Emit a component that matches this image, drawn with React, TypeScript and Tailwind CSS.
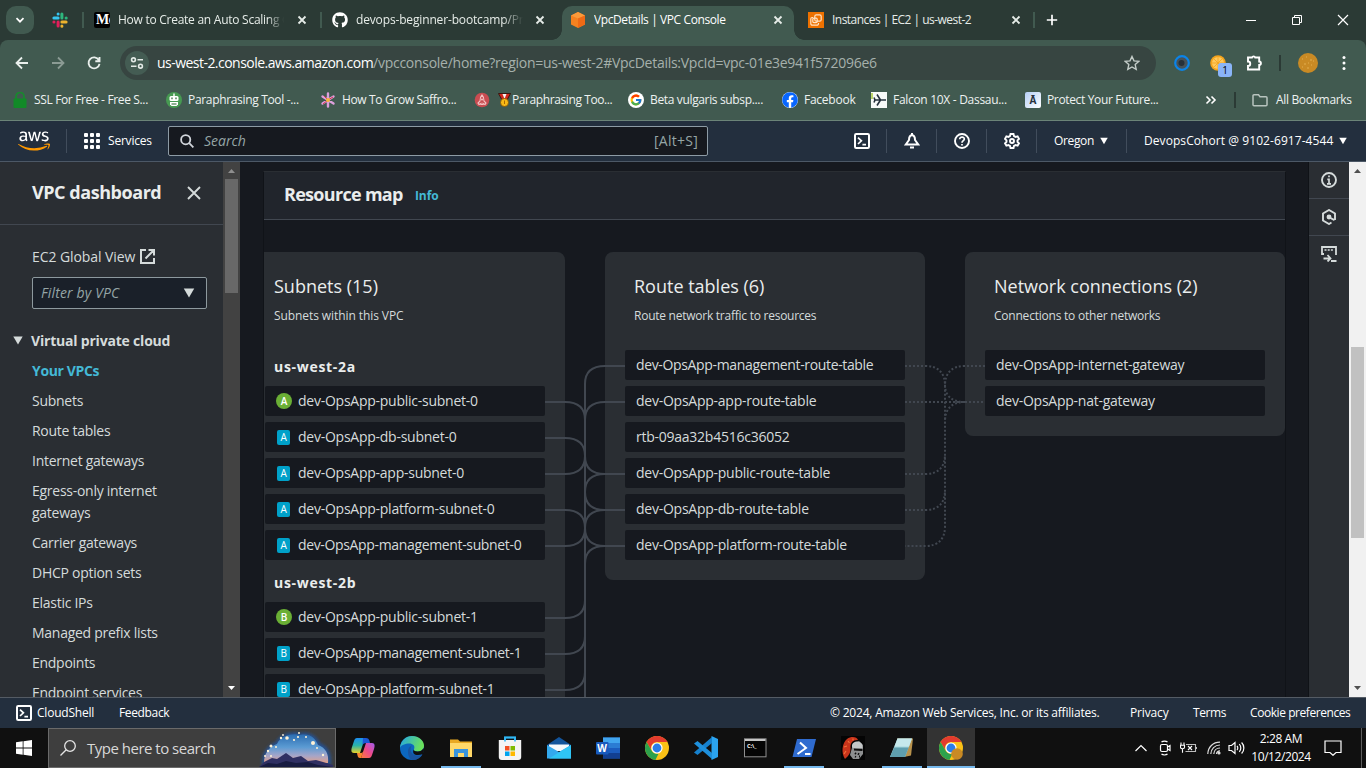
import React from "react";
import { FaAws, FaGithub, FaFacebook } from "react-icons/fa";
import { FcGoogle } from "react-icons/fc";

type Kids = { children?: React.ReactNode; className?: string };

/* ---------- small shared pieces ---------- */

const Cross = ({ className = "size-3" }: { className?: string }) => (
  <svg viewBox="0 0 12 12" className={`${className} shrink-0`} stroke="currentColor" strokeWidth="1.8" fill="none">
    <path d="M2.5 2.5l7 7M9.5 2.5l-7 7" />
  </svg>
);

const Caret = ({ className = "" }: { className?: string }) => (
  <svg viewBox="0 0 10 9" className={`shrink-0 ${className}`} fill="currentColor">
    <path d="M.3.5h9.4L5 8.5z" />
  </svg>
);

const ShellIcon = () => (
  <svg viewBox="0 0 16 16" className="size-4 shrink-0" fill="none" stroke="currentColor" strokeWidth="2">
    <rect x="1" y="1" width="14" height="14" rx="1.2" />
    <path d="M4 4.6l3.4 3.2L4 11M8.4 11.6H12" strokeWidth="1.7" />
  </svg>
);

/* ---------- browser chrome ---------- */

const SlackIcon = () => (
  <svg viewBox="0 0 16 16" className="size-4 shrink-0">
    <g strokeWidth="3" strokeLinecap="round">
      <path d="M6.1 1.9v.1M1.9 6.1h4.200" stroke="#36c5f0" />
      <path d="M9.9 1.9v4.200M14.1 6.1h.1" stroke="#2eb67d" />
      <path d="M9.9 9.9h4.2M9.9 14.1v.1" stroke="#ecb22e" />
      <path d="M6.1 9.9v4.2M1.9 9.9h.1" stroke="#e01e5a" />
    </g>
  </svg>
);

const MediumIcon = () => (
  <div className="flex size-4 shrink-0 items-center overflow-hidden rounded-[2px] bg-black pl-[2px] font-['Liberation_Serif',serif] text-[14px] font-bold leading-none tracking-[-0.5px] text-white">
    Me
  </div>
);

const VpcIcon = () => (
  <svg viewBox="0 0 16 16" className="size-4 shrink-0">
    <path d="M8 0l7 3.4v9L8 16l-7-3.600V3.400z" fill="#f58220" />
    <path d="M8 0l7 3.400-7 3.200-7-3.200z" fill="#fb9a3a" />
    <path d="M15 3.400v9L8 16V6.600z" fill="#ef6a15" />
  </svg>
);

const Ec2Icon = () => (
  <svg viewBox="0 0 16 16" className="size-4 shrink-0">
    <rect width="16" height="16" fill="#ed7100" />
    <g fill="none" stroke="#ffe3c4" strokeWidth="1.200">
      <rect x="6.800" y="2.800" width="6.400" height="6.400" rx="1.500" />
      <path d="M5 5.500h-.800A1.500 1.500 0 0 0 2.800 7v4.700a1.500 1.500 0 0 0 1.500 1.500H9a1.500 1.500 0 0 0 1.500-1.500V11" />
      <rect x="4.800" y="6.200" width="4.400" height="4.400" rx="1" />
    </g>
  </svg>
);

const TabText = ({ children, className = "" }: Kids) => (
  <span className={`ml-2 min-w-0 flex-1 overflow-hidden whitespace-nowrap text-[12px] ${className}`}>{children}</span>
);

const Divider = () => <span className="-ml-px h-4 w-0.5 shrink-0 bg-[#415a50]" />;

const TabStrip = () => (
  <div className="flex h-10 shrink-0 bg-[#2b3a35] text-[#e6ece8]">
    <div className="flex w-[82px] shrink-0 items-center pl-1.5">
      <div className="flex size-7 items-center justify-center rounded-[10px] bg-[#415a50]">
        <svg viewBox="0 0 10 10" className="size-2.5" fill="none" stroke="white" strokeWidth="1.700"><path d="M1.500 3.200L5 6.700l3.500-3.500" /></svg>
      </div>
      <span className="ml-[18px]"><SlackIcon /></span>
    </div>
    <div className="flex w-[238px] shrink-0 items-center pr-3">
      <span className="mr-[10px] h-4 w-0.5 bg-[#415a50]" />
      <MediumIcon />
      <TabText className="mr-3 tracking-[-0.26px] [mask-image:linear-gradient(to_right,black_90%,transparent)]">How to Create an Auto Scaling Group</TabText>
      <Cross />
    </div>
    <div className="flex w-[242px] shrink-0 items-center pr-4">
      <span className="mr-[10px] h-4 w-0.5 bg-[#415a50]" />
      <FaGithub className="size-4 shrink-0 text-white" />
      <TabText className="mr-[11px] tracking-[-0.15px] [mask-image:linear-gradient(to_right,black_88%,transparent)]">devops-beginner-bootcamp/Projects</TabText>
      <Cross />
    </div>
    <div className="relative mt-1.5 flex w-[232px] shrink-0 items-center rounded-t-[10px] bg-[#415a50] pb-1.5 pl-2 pr-[10px]">
      <span className="absolute -left-2.5 bottom-0 size-2.5 bg-[radial-gradient(circle_at_0_0,transparent_9.500px,#415a50_10px)]" />
      <span className="absolute -right-2.5 bottom-0 size-2.5 bg-[radial-gradient(circle_at_100%_0,transparent_9.500px,#415a50_10px)]" />
      <VpcIcon />
      <TabText className="tracking-[-0.4px] text-white">VpcDetails | VPC Console</TabText>
      <Cross />
    </div>
    <div className="flex w-[240px] shrink-0 items-center pl-[14px] pr-3">
      <Ec2Icon />
      <TabText className="tracking-[-0.53px]">Instances | EC2 | us-west-2</TabText>
      <Cross />
    </div>
    <div className="flex flex-1 items-center">
      <Divider />
      <svg viewBox="0 0 12 12" className="ml-[11px] size-3" stroke="white" strokeWidth="1.700"><path d="M6 .800v10.400M.800 6h10.400" /></svg>
      <div className="ml-auto flex items-center gap-[34px] pr-[17px] text-white">
        <svg viewBox="0 0 12 12" className="size-3" stroke="currentColor"><path d="M1 6.500h10" /></svg>
        <svg viewBox="0 0 12 12" className="size-3" fill="none" stroke="currentColor"><path d="M1.500 3.500h7v7h-7zM3.500 3.500v-2h7v7h-2" /></svg>
        <svg viewBox="0 0 12 12" className="size-3" stroke="currentColor" strokeWidth="1.200"><path d="M1 1l10 10M11 1L1 11" /></svg>
      </div>
    </div>
  </div>
);

const Toolbar = () => (
  <div className="flex h-[46px] shrink-0 items-center rounded-t-lg bg-[#415a50] text-[#e9efec]">
    <div className="flex w-[120px] shrink-0 items-center gap-5 pl-3.5">
      <svg viewBox="0 0 16 16" className="size-4" fill="none" stroke="currentColor" strokeWidth="1.800"><path d="M14 8H3M8 2.500L2.500 8 8 13.500" /></svg>
      <svg viewBox="0 0 16 16" className="size-4 text-[#8b9b94]" fill="none" stroke="currentColor" strokeWidth="1.800"><path d="M2 8h11M8 2.500L13.500 8 8 13.500" /></svg>
      <svg viewBox="0 0 16 16" className="size-4" fill="none" stroke="currentColor" strokeWidth="1.900"><path d="M12.800 5A5.500 5.500 0 1 0 13.500 8.800M13.500 2v4.200H9.300" /></svg>
    </div>
    <div className="flex h-[34px] w-[1036px] shrink-0 items-center rounded-full bg-[#374541] pl-[5px] pr-4">
      <div className="flex size-6 items-center justify-center rounded-full bg-[#445c53]">
        <svg viewBox="0 0 14 14" className="size-3.5" fill="none" stroke="#e3e9e6" strokeWidth="1.600">
          <circle cx="3.500" cy="3.800" r="1.900" /><path d="M7.500 3.800H13M1 10.200h5.500" /><circle cx="10.500" cy="10.200" r="1.900" />
        </svg>
      </div>
      <span className="ml-2 whitespace-pre pb-0.5 text-[14px]">
        <span className="tracking-[-0.53px] text-white">us-west-2.console.aws.amazon.com</span>
        <span className="tracking-[-0.27px] text-[#a6b1ac]">/vpcconsole/home?region=us-west-2#VpcDetails:VpcId=vpc-01e3e941f572096e6</span>
      </span>
      <svg viewBox="0 0 16 16" className="ml-auto size-4" fill="none" stroke="#c4cdc9" strokeWidth="1.400"><path d="M8 1.500l2 4.400 4.700.500-3.500 3.200 1 4.800L8 12l-4.200 2.400 1-4.800L1.300 6.400l4.700-.500z" /></svg>
    </div>
    <div className="flex flex-1 items-center pl-[18px]">
      <svg viewBox="0 0 16 16" className="size-4"><circle cx="8" cy="8" r="6.800" fill="#46525a" stroke="#0b84e8" strokeWidth="2.200" /><circle cx="7.500" cy="8" r="3" fill="#27313a" /></svg>
      <div className="relative ml-5 size-4">
        <svg viewBox="0 0 16 16" className="size-4"><circle cx="8" cy="8" r="7.800" fill="#f3a31c" /><circle cx="8" cy="8" r="6" fill="#ffc95c" /><path d="M8 2v12M2 8h12M4 4l8 8M12 4l-8 8" stroke="#f3a31c" strokeWidth=".8" /></svg>
        <span className="absolute left-2 top-2 flex h-[14px] w-[14px] items-center justify-center rounded-[3px] bg-[#8ab4f8] text-[10px] text-black">1</span>
      </div>
      <svg viewBox="0 0 18 18" className="ml-[19px] size-[18px]" fill="none" stroke="white" strokeWidth="1.900"><path d="M3 3.500h4a1.700 1.700 0 0 1 3.200 0h4v4a1.700 1.700 0 0 1 0 3.400v4.600H3v-3.500a2 2 0 0 0 0-4.500z" /></svg>
      <span className="ml-4 h-4 w-0.5 bg-[#2b3a35]" />
      <svg viewBox="0 0 20 20" className="ml-[17px] size-5"><circle cx="10" cy="10" r="10" fill="#c98a24" /><path d="M4 6h1M8 4h1M12 7h2M6 11h2M13 12h1M9 15h2M15 8h1M10 10h1M4 14h1" stroke="#e4ad4e" strokeWidth="1.200" /></svg>
      <svg viewBox="0 0 4 16" className="ml-6 h-4 w-1" fill="white"><circle cx="2" cy="2.500" r="1.500" /><circle cx="2" cy="8" r="1.500" /><circle cx="2" cy="13.500" r="1.500" /></svg>
    </div>
  </div>
);

const Bookmark = ({ icon, children, className = "w-[154px]" }: Kids & { icon: React.ReactNode }) => (
  <div className={`flex shrink-0 items-center gap-1.5 whitespace-nowrap ${className}`}>
    <span className="size-4 shrink-0">{icon}</span>
    {children}
  </div>
);

const Bookmarks = () => (
  <div className="flex h-[34px] shrink-0 items-center bg-[#415a50] pb-1.5 pl-3 pr-[14px] text-[12px] text-[#eef2f0]">
    <Bookmark icon={<svg viewBox="0 0 16 16"><path d="M4 7V4.500a4 4 0 0 1 8 0V7" fill="none" stroke="#188a2e" strokeWidth="1.700" /><rect x="1.500" y="6.500" width="13" height="9.500" rx="1" fill="#128a28" /></svg>}>
      <span className="tracking-[-0.35px]">SSL For Free - Free S...</span>
    </Bookmark>
    <Bookmark icon={<svg viewBox="0 0 16 16"><circle cx="8" cy="8" r="8" fill="#479a52" /><path d="M8 1.500v3" stroke="white" strokeWidth="1.400" /><rect x="3.500" y="4" width="9" height="5" rx="1.500" fill="white" /><path d="M4 10h8v2.500L10.500 14h-5L4 12.500z" fill="white" /><path d="M6 5.500v1.800M10 5.500v1.800M5.500 12h5" stroke="#27632f" strokeWidth="1.200" /></svg>}>
      <span className="tracking-[-0.33px]">Paraphrasing Tool -...</span>
    </Bookmark>
    <Bookmark icon={<svg viewBox="0 0 16 16"><g stroke="#dda0dc" strokeWidth="2.400" strokeLinecap="round"><path d="M8 1.500v13M2.500 4.500l11 7M13.500 4.500l-11 7" /></g><path d="M8 8l-4-4M8 8l5-3M8 8l-5 4" stroke="#d8344c" /><circle cx="8" cy="8" r="2" fill="#f4b63c" /></svg>}>
      <span className="tracking-[-0.35px]">How To Grow Saffro...</span>
    </Bookmark>
    <Bookmark icon={<svg viewBox="0 0 16 16"><circle cx="8" cy="8" r="7.300" fill="#c94c51" /><path d="M8 3c2 2 2 4 2 6l2 2-1 1.500-2-1v1H7v-1l-2 1L4 11l2-2c0-2 0-4 2-6z" fill="none" stroke="#f3c4c4" strokeWidth="1.100" /><circle cx="8" cy="7.500" r="1" fill="#f3c4c4" /></svg>}>
      <span className="flex items-center gap-px pl-0.5 tracking-[-0.4px]">
        <svg viewBox="0 0 13 14" className="h-3.5 w-[13px]"><path d="M.5.500h12L9 7H4z" fill="#d2271c" stroke="#2a0d08" strokeWidth=".8" /><path d="M4.500 1h4L6.500 6z" fill="#f4f4f4" /><circle cx="6.500" cy="9.500" r="4" fill="#f9b916" stroke="#7a4a05" strokeWidth=".7" /><path d="M6.500 7.500v3.500" stroke="#a66a06" /></svg>
        Paraphrasing Too...
      </span>
    </Bookmark>
    <Bookmark icon={<svg viewBox="0 0 16 16"><circle cx="8" cy="8" r="8" fill="white" /><g transform="translate(1.500 1.500)"><FcGoogle size={13} /></g></svg>}>
      <span className="tracking-[-0.35px]">Beta vulgaris subsp....</span>
    </Bookmark>
    <Bookmark className="w-[89px]" icon={<div className="size-4 rounded-full bg-white"><FaFacebook className="size-4 text-[#0866ff]" /></div>}>
      <span className="tracking-[-0.25px]">Facebook</span>
    </Bookmark>
    <Bookmark icon={<svg viewBox="0 0 16 16"><rect width="16" height="16" fill="#f7f9f8" /><path d="M1 1v6" stroke="#a8c83c" strokeWidth="1.500" /><path d="M3 8h12M9.500 8L6 2.500M9.500 8L6 13.500M4 8L3 5.500M4 8L3 10.500" stroke="#25303c" strokeWidth="1.600" fill="none" /></svg>}>
      <span className="tracking-[-0.3px]">Falcon 10X - Dassau...</span>
    </Bookmark>
    <Bookmark icon={<div className="flex size-4 items-center justify-center rounded-[2px] bg-gradient-to-br from-[#b5cff5] to-white text-[10px] font-bold leading-none text-[#28323f]">Ā</div>}>
      <span className="tracking-[-0.35px]">Protect Your Future...</span>
    </Bookmark>
    <div className="ml-auto flex items-center">
      <svg viewBox="0 0 12 12" className="size-3" fill="none" stroke="white" strokeWidth="1.600"><path d="M1.500 2.500L5 6 1.500 9.500M6.500 2.500L10 6 6.500 9.500" /></svg>
      <span className="ml-[17px] h-4 w-0.5 bg-[#2b3a35]" />
      <svg viewBox="0 0 16 16" className="ml-4 mr-2 size-4" fill="none" stroke="#b8c3be" strokeWidth="1.500"><path d="M1 3.800A1 1 0 0 1 2 2.800h4.500l1.500 2h6a1 1 0 0 1 1 1v7a1 1 0 0 1-1 1H2a1 1 0 0 1-1-1z" /></svg>
      <span className="w-[76px] whitespace-nowrap tracking-[-0.33px]">All Bookmarks</span>
    </div>
  </div>
);

/* ---------- console ---------- */

const NavIcon = ({ children, className = "w-[50px]" }: Kids) => (
  <div className={`flex h-6 items-center justify-center border-r border-[#414d5c] ${className}`}>{children}</div>
);

const ConsoleNav = () => (
  <div className="flex h-[42px] shrink-0 items-center border-b border-t border-b-[#4c5866] border-t-[#6b8478] bg-[#232f3e] text-[12px] text-white">
    <div className="relative ml-[18px] h-[26px] w-8">
      <FaAws className="h-[26px] w-8 [clip-path:inset(0_0_42%_0)]" />
      <FaAws className="absolute left-0 top-0 h-[26px] w-8 text-[#ff9900] [clip-path:inset(58%_0_0_0)]" />
    </div>
    <span className="ml-4 h-6 w-px bg-[#414d5c]" />
    <div className="ml-[17px] grid size-4 grid-cols-3 gap-[2px]">
      {Array.from({ length: 9 }, (_, i) => <span key={i} className="rounded-[1px] bg-white" />)}
    </div>
    <span className="ml-2 w-[60px] tracking-[-0.2px]">Services</span>
    <div className="flex h-[30px] w-[540px] items-center rounded-[2px] border border-[#8d9ba5] bg-[#16191f] pl-[11px] pr-[9px] text-[14px] text-[#95a5a6]">
      <svg viewBox="0 0 14 14" className="size-3.5" fill="none" stroke="#d1d5db" strokeWidth="1.800"><circle cx="5.700" cy="5.700" r="4.600" /><path d="M9.200 9.200l4.200 4.200" /></svg>
      <span className="ml-[10px] pb-px italic">Search</span>
      <span className="ml-auto pb-px tracking-[0.25px]">[Alt+S]</span>
    </div>
    <div className="ml-auto flex items-center">
      <NavIcon><ShellIcon /></NavIcon>
      <NavIcon>
        <svg viewBox="0 0 16 16" className="size-4" fill="none" stroke="currentColor" strokeWidth="2"><path d="M8 0v2M1.800 11.500L5 7c0-3 .600-4.800 3-4.800S11 4 11 7l3.200 4.500zM6 14.500h4" /></svg>
      </NavIcon>
      <NavIcon>
        <svg viewBox="0 0 16 16" className="size-4" fill="none" stroke="currentColor" strokeWidth="1.900"><circle cx="8" cy="8" r="7" /><path d="M5.700 6.200C5.700 3.300 10.500 3.500 10.300 6.200 10.200 7.600 8 7.700 8 9.800M8 10.900v1.700" strokeWidth="1.700" /></svg>
      </NavIcon>
      <NavIcon>
        <svg viewBox="0 0 16 16" className="size-4" fill="none" stroke="currentColor" strokeWidth="1.900"><path d="M6.500 1h3l.5 2 1.600.900 2-.600 1.400 2.500-1.500 1.500v1.500l1.500 1.500-1.400 2.400-2-.600L10 13l-.5 2h-3L6 13l-1.600-.900-2 .600L1 10.300l1.500-1.500V7.300L1 5.800l1.400-2.500 2 .600L6 3z" /><circle cx="8" cy="8" r="2" /></svg>
      </NavIcon>
      <div className="flex h-6 w-[90px] items-center gap-1.5 border-r border-[#414d5c] pl-[17px]">
        <span className="w-10 tracking-[-0.35px]">Oregon</span><Caret className="h-2 w-2" />
      </div>
      <div className="flex h-6 w-[239px] items-center gap-1.5 whitespace-nowrap pl-[17px]">
        <span className="w-[189px] tracking-[0.07px]">DevopsCohort @ 9102-6917-4544</span><Caret className="h-2 w-2" />
      </div>
    </div>
  </div>
);

const links = ["Subnets", "Route tables", "Internet gateways", "Egress-only internet gateways", "Carrier gateways", "DHCP option sets", "Elastic IPs", "Managed prefix lists", "Endpoints", "Endpoint services"];

const Sidebar = () => (
  <aside className="flex w-[240px] shrink-0 overflow-hidden bg-[#2a2e33] text-[14px] text-[#d5dbdb]">
    <div className="w-[223px] shrink-0">
      <div className="flex h-[63px] items-center justify-between border-b border-[#414750] pl-8 pr-[21px]">
        <h2 className="whitespace-nowrap pb-px text-[18px] font-bold tracking-[-0.45px] text-[#eaeded]">VPC dashboard</h2>
        <svg viewBox="0 0 16 16" className="size-4" stroke="#d5dbdb" strokeWidth="1.900"><path d="M2 2l12 12M14 2L2 14" /></svg>
      </div>
      <div className="mt-[20px] flex h-[22px] items-center pl-8 tracking-[-0.08px]">
        <span className="w-[108px] whitespace-nowrap">EC2 Global View</span>
        <svg viewBox="0 0 15 15" className="size-[15px]" fill="none" stroke="currentColor" strokeWidth="2"><path d="M6 1H1v13h13V9M8.500 1H14v5.500M13.500 1.500L5.500 9.500" /></svg>
      </div>
      <div className="ml-8 mt-[10px] flex h-8 w-[175px] items-center justify-between rounded-[2px] border border-[#8d999e] bg-[#1a2029] pl-2 pr-[11px]">
        <span className="pb-px italic tracking-[0.15px] text-[#95a5a6]">Filter by VPC</span>
        <Caret className="h-[10px] w-3" />
      </div>
      <div className="mt-5 flex h-[22px] items-center gap-2 pl-[13px] font-bold">
        <Caret className="h-[9px] w-2.5" />
        <span className="tracking-[-0.2px]">Virtual private cloud</span>
      </div>
      <ul className="mt-[9px] space-y-2 pl-8 leading-[22px]">
        <li className="font-bold tracking-[-0.35px] text-[#44b9d6]">Your VPCs</li>
        {links.map((l) => <li key={l} className="w-[150px] tracking-[-0.27px]">{l}</li>)}
      </ul>
    </div>
    <div className="flex w-[17px] flex-col items-center bg-[#424242]">
      <svg viewBox="0 0 17 17" className="size-[17px] shrink-0" fill="#8f8f8f"><path d="M5 11h7L8.500 7z" /></svg>
      <div className="h-[114px] w-[13px] bg-[#686868]" />
      <svg viewBox="0 0 17 17" className="mt-auto size-[17px] shrink-0" fill="white"><path d="M5 6h7L8.500 10z" /></svg>
    </div>
  </aside>
);

const Node = ({ children, className = "" }: Kids) => (
  <div className={`flex h-[30px] w-[280px] shrink-0 items-center whitespace-nowrap rounded-[2px] bg-[#16191f] pb-px pl-[11px] text-[14px] text-[#d5dbdb] ${className}`}>{children}</div>
);

const fit = (name: string) => (name.includes("management") ? "tracking-[-0.35px]" : "tracking-[-0.25px]");

const Subnet = ({ zone, name, open }: { zone: string; name: string; open?: boolean }) => (
  <Node className={fit(name)}>
    <span className={open ? "mt-px flex size-4 items-center justify-center rounded-full bg-[#6aaf35] text-[10px] font-semibold text-white" : "mx-px mt-px flex h-[15px] w-[13px] items-center justify-center rounded-[2px] bg-[#00a1c9] text-[10px] text-white"}>{zone}</span>
    <span className={open ? "ml-1.5" : "ml-[7px]"}>{name}</span>
  </Node>
);

const CardHead = ({ title, text, className = "" }: { title: string; text: string; className?: string }) => (
  <>
    <h3 className="-mt-px text-[18px] leading-[22px] text-[#eaeded]">{title}</h3>
    <p className={`mt-[10px] text-[12px] leading-[18px] text-[#d5dbdb] ${className}`}>{text}</p>
  </>
);

const zones = [
  { name: "us-west-2a", tag: "A", nets: ["public-subnet-0", "db-subnet-0", "app-subnet-0", "platform-subnet-0", "management-subnet-0"] },
  { name: "us-west-2b", tag: "B", nets: ["public-subnet-1", "management-subnet-1", "platform-subnet-1"] },
];
const tables = ["dev-OpsApp-management-route-table", "dev-OpsApp-app-route-table", "rtb-09aa32b4516c36052", "dev-OpsApp-public-route-table", "dev-OpsApp-db-route-table", "dev-OpsApp-platform-route-table"];

/* Coordinates are relative to the map canvas. */
const Links = () => (
  <svg className="pointer-events-none absolute left-0 top-0 h-[477px] w-[1021px]" fill="none" stroke="#414750" strokeWidth="2">
    {[182, 218, 290].map((y) => <path key={y} d={`M281 ${y}H301Q321 ${y} 321 ${y + 18}`} />)}
    {[254, 326, 398, 434, 470].map((y) => <path key={y} d={`M281 ${y}H301Q321 ${y} 321 ${y - 18}`} />)}
    {[146, 182, 254, 290, 326].map((y) => <path key={y} d={`M361 ${y}H341Q321 ${y} 321 ${y + 18}`} />)}
    {[254, 290, 326].map((y) => <path key={y} d={`M341 ${y}Q321 ${y} 321 ${y - 18}`} />)}
    <path d="M321 164V477" />
    <g strokeDasharray="2 2">
      <path d="M641 146H661Q681 146 681 166V306Q681 326 661 326H641" />
      <path d="M641 254H661Q681 254 681 234M641 290H661Q681 290 681 270" />
      <path d="M641 182H721M721 146H701Q681 146 681 166M701 182Q681 182 681 164M701 182Q681 182 681 202" />
    </g>
  </svg>
);

const ResourceMap = () => (
  <section className="ml-[23px] mt-[9px] flex w-[1023px] shrink-0 flex-col overflow-hidden border-x border-t border-x-[#101318] border-t-[#2a2e33]">
    <header className="flex h-[48px] shrink-0 items-center border-b border-[#414750] bg-[#21252c] pb-[3px] pl-5">
      <h2 className="w-[131px] whitespace-nowrap text-[18px] font-bold tracking-[-0.7px] text-[#eaeded]">Resource map</h2>
      <a className="pt-1 text-[12px] font-bold tracking-[-0.1px] text-[#44b9d6]">Info</a>
    </header>
    <div className="relative flex flex-1 items-start gap-10 pt-8">
      <div className="h-[600px] w-[301px] shrink-0 rounded-tr-lg bg-[#2a2e33] pt-6">
        <div className="pl-2.5"><CardHead title="Subnets (15)" text="Subnets within this VPC" className="tracking-[-0.08px]" /></div>
        <div className="pl-px pt-[31px]">
          {zones.map((z) => (
            <div key={z.name}>
              <h4 className="mb-2 pl-[9px] text-[14px] font-bold leading-[22px] tracking-[0.7px] text-[#eaeded]">{z.name}</h4>
              <div className="mb-3 flex flex-col gap-1.5">
                {z.nets.map((n, i) => <Subnet key={n} zone={z.tag} name={`dev-OpsApp-${n}`} open={i === 0} />)}
              </div>
            </div>
          ))}
        </div>
      </div>
      <div className="h-[328px] w-80 shrink-0 rounded-lg bg-[#2a2e33] px-5 pt-6">
        <div className="pl-[9px]"><CardHead title="Route tables (6)" text="Route network traffic to resources" className="tracking-[-0.25px]" /></div>
        <div className="mt-[25px] flex flex-col gap-1.5">{tables.map((t) => <Node key={t} className={fit(t)}>{t}</Node>)}</div>
      </div>
      <div className="h-[184px] w-80 shrink-0 rounded-lg bg-[#2a2e33] px-5 pt-6">
        <div className="pl-[9px]"><CardHead title="Network connections (2)" text="Connections to other networks" className="tracking-[-0.22px]" /></div>
        <div className="mt-[25px] flex flex-col gap-1.5">
          <Node className="tracking-[-0.25px]">dev-OpsApp-internet-gateway</Node>
          <Node className="tracking-[-0.25px]">dev-OpsApp-nat-gateway</Node>
        </div>
      </div>
      <Links />
    </div>
  </section>
);

const ToolRail = () => (
  <aside className="ml-auto flex w-[41px] shrink-0 flex-col border-l border-[#0f1217] bg-[#2a2e33] text-[#d5dbdb]">
    {[
      <g key="i"><circle cx="8" cy="8" r="7" /><path d="M8 3.500v1.800M6.300 7.300H8v4M6 11.800h4" strokeWidth="1.700" /></g>,
      <g key="h"><path d="M10.500 13.500L8 15l-6-3.500v-7L8 1l6 3.500v6.500" /><circle cx="8" cy="8" r="1.500" fill="currentColor" /><path d="M8.500 8.500l5 2.700" /></g>,
      <g key="s"><path d="M15 9V1H1v7h2M10 15h5.500M2.500 12.500H9M6.500 9l3 3.500-3 3" strokeWidth="1.800" /><path d="M3.500 4h9" strokeDasharray="2 1.200" strokeWidth="1.600" /></g>,
    ].map((g, i) => (
      <div key={i} className={i < 2 ? "flex h-[37px] items-center justify-center border-b border-[#414750]" : "flex h-9 items-center justify-center"}>
        <svg viewBox="0 0 16 16" className="size-4" fill="none" stroke="currentColor" strokeWidth="1.900">{g}</svg>
      </div>
    ))}
  </aside>
);

const PageScroll = () => (
  <div className="flex w-[17px] shrink-0 flex-col items-center bg-[#f1f1f1]">
    <svg viewBox="0 0 17 17" className="size-[17px]" fill="#505050"><path d="M5 11h7L8.500 7z" /></svg>
    <div className="mt-[168px] h-[191px] w-[13px] bg-[#c1c1c1]" />
    <svg viewBox="0 0 17 17" className="mt-auto size-[17px]" fill="#505050"><path d="M5 6h7L8.500 10z" /></svg>
  </div>
);

const ConsoleFooter = () => (
  <footer className="flex h-[31px] shrink-0 items-center whitespace-nowrap border-t border-[#545b64] bg-[#232f3e] pl-4 text-[12px] text-white">
    <ShellIcon />
    <span className="ml-[5px] w-[82px] tracking-[-0.22px]">CloudShell</span>
    <span className="tracking-[-0.35px]">Feedback</span>
    <div className="ml-auto flex">
      <span className="w-[300px] tracking-[-0.2px]">© 2024, Amazon Web Services, Inc. or its affiliates.</span>
      <span className="w-[63px] tracking-[-0.15px]">Privacy</span>
      <span className="w-[57px] tracking-[-0.4px]">Terms</span>
      <span className="w-[116px] tracking-[-0.43px]">Cookie preferences</span>
    </div>
  </footer>
);

/* ---------- taskbar ---------- */

const Chrome = () => (
  <>
    <circle cx="12" cy="12" r="12" fill="#fbc116" />
    <path d="M1.600 6A12 12 0 0 1 22.400 6H12a6 6 0 0 0-5.200 9z" fill="#e33b2e" />
    <path d="M1.600 6L6.800 15a6 6 0 0 0 6.700 2.800L10.400 23.900A12 12 0 0 1 1.600 6z" fill="#2da14c" />
    <circle cx="12" cy="12" r="5.600" fill="white" /><circle cx="12" cy="12" r="4.400" fill="#2b7de9" />
  </>
);

const apps: { id: string; run?: boolean; active?: boolean; art: React.ReactNode }[] = [
  { id: "copilot", art: <><defs><linearGradient id="cpa" x1="0" y1="0" x2="0" y2="1"><stop offset="0" stopColor="#1c8df0" /><stop offset=".5" stopColor="#2bb5a8" /><stop offset="1" stopColor="#e6d128" /></linearGradient><linearGradient id="cpb" x1="0" y1="1" x2="1" y2="0"><stop offset="0" stopColor="#ff7a3c" /><stop offset=".5" stopColor="#ee4a8b" /><stop offset="1" stopColor="#a15df0" /></linearGradient></defs><path d="M6 2h8l-5 15H3c-3 0-3-3-2-6l2-6c.600-2 1.500-3 3-3z" fill="url(#cpa)" /><path d="M12 2h3c2 0 3 1 3.500 3l.5 2h-4c-2 0-3 1-3.500 2z" fill="#1b57d4" /><path d="M18 22h-8l5-15h6c3 0 3 3 2 6l-2 6c-.600 2-1.500 3-3 3z" fill="url(#cpb)" /><path d="M6 17h4c1.500 0 2-1 2.500-2L10 22H9c-2 0-2.500-2-3-5z" fill="#f8842f" /></> },
  { id: "edge", art: <><defs><linearGradient id="eg" x1="0" y1="0" x2="1" y2=".3"><stop offset="0" stopColor="#22a5e8" /><stop offset="1" stopColor="#6ae05c" /></linearGradient></defs><circle cx="12" cy="12" r="12" fill="#0c67bf" /><path d="M0 12C.500 4.500 6 0 12 0c7 0 12 5 12 9.500 0 4-3 6-6.500 6-3 0-4-1.200-3.500-2.300 1.500-3.500-1.500-5.700-4.500-5.700C5 7.500 1 9 0 12z" fill="url(#eg)" /><path d="M8 16c0-4 2-6 4-6.500C10 11 9 20 19 19.500c2 0 3-1 3.500-1C20.500 22 17 24 13 24c-3 0-5-4-5-8z" fill="#1854a0" /><path d="M14 13.200c-.500 1.100.500 2.300 3.500 2.300 2.500 0 5-1 6-3.500.800 2 .500 4-.500 6-7 3-12-.500-9-4.800z" fill="#101010" /></> },
  { id: "explorer", run: true, art: <><path d="M1 3.500h8l2 2h12V20H1z" fill="#e9a923" /><path d="M1 7h22v14H1z" fill="#ffd869" /><path d="M5 21v-8h14v8h-4v-4H9v4z" fill="#3a94dc" /></> },
  { id: "store", art: <><path d="M7 6V1.500h10V6" fill="none" stroke="#2fb6f3" strokeWidth="2" /><path d="M.800 4h22.400v17a3 3 0 0 1-3 3H3.800a3 3 0 0 1-3-3z" fill="#f4f4f4" /><path d="M7 5.500V1.500h10v4" fill="none" stroke="#2fb6f3" strokeWidth="1.600" /><path d="M7 10h4.500v4.500H7z" fill="#f25022" /><path d="M12.500 10H17v4.500h-4.500z" fill="#7fba00" /><path d="M7 15.500h4.500V20H7z" fill="#00a4ef" /><path d="M12.500 15.500H17V20h-4.500z" fill="#ffb900" /></> },
  { id: "mail", art: <><path d="M0 9l12-8 12 8v3H0z" fill="#12549b" /><path d="M2 8.500h20V15H2z" fill="#f5f8fb" /><path d="M0 9l12 7L24 9v13.500H0z" fill="#33a9ee" /><path d="M24 9v13.500H2z" fill="#2fc5f5" /></> },
  { id: "word", art: <><path d="M7 1.500h17v21H7z" fill="#1b5cbe" /><path d="M7 1.500h17v5.500H7z" fill="#41a5ee" /><path d="M7 7h17v5H7z" fill="#2b7cd3" /><path d="M7 17h17v5.500H7z" fill="#123f91" /><rect y="6" width="12.500" height="12.500" rx="1" fill="#185abd" /><text x="6.200" y="15.800" textAnchor="middle" fontSize="10" fontWeight="700" fill="white">W</text></> },
  { id: "chrome", art: <Chrome /> },
  { id: "code", art: <><path d="M17.500 0L24 3v18l-6.500 3z" fill="#2ba4f0" /><path d="M18 1v6L3.500 19 0 16.500z" fill="#1681ce" /><path d="M18 23v-6L3.500 5 0 7.500z" fill="#1e90dc" /></> },
  { id: "cmd", art: <><rect x="1.500" y="2.800" width="21.500" height="18" fill="#050505" stroke="#8f8f8f" /><path d="M2 3h20.500v2H2z" fill="#c5c5c5" /><text x="4" y="11.500" fontSize="5.500" fontWeight="700" fill="white">C:\_</text></> },
  { id: "powershell", run: true, art: <><path d="M5 3h19l-4.500 18H0.500z" fill="#2f6bcf" /><path d="M8 6.500l6 5.500-8.500 6M13 18h5.500" fill="none" stroke="white" strokeWidth="2" /></> },
  { id: "knight", art: <><rect width="24" height="24" fill="#040404" /><path d="M12 8l6-3 4 4v9l-4 5h-6l-3-4z" fill="#8d8f90" /><path d="M11 9c1-4 7-5 10-1l.500 4-7 .500-3.500-1z" fill="#c3c6c7" /><path d="M4 23C0 17 1 7 6 3c4-3 10-2.500 11 1-5-.500-8 3-7.500 8 .300 5-2 8-5.500 11z" fill="#c9341b" /><path d="M3 18l2-3M3 11l3-1M7 5l1.500 2M12 2.500v2" stroke="#f0703a" strokeWidth="1.200" /><path d="M13 13.500l8.500.500M14 17l1 1M17 17.500l1 1M14 20.500l1 .500M18 20.500h1" stroke="#0c0c0c" strokeWidth="1.800" /></> },
  { id: "notepad", run: true, art: <><path d="M7 2.500h16l-2 17L14 21z" fill="#b8924c" /><path d="M7.500 2.500H22L15 21H0z" fill="#a7d7df" /><path d="M7.500 2.500H22l-3 8H4.500z" fill="#c6e9ec" /><path d="M0 21l4.200-9.500h14.500L15 21z" fill="#5f9fae" /></> },
  { id: "chrome-profile", run: true, active: true, art: <><Chrome /><circle cx="18" cy="18" r="5.800" fill="#c98a24" /></> },
];

const Taskbar = () => (
  <div className="flex h-10 shrink-0 bg-[#101010] text-white">
    <div className="flex w-12 shrink-0 items-center justify-center">
      <svg viewBox="0 0 16 16" className="size-4" fill="white"><path d="M0 2.200l6.700-.900v6.300H0zM7.500 1.200L16 0v7.600H7.500zM0 8.400h6.700v6.300L0 13.800zM7.500 8.400H16V16l-8.500-1.200z" /></svg>
    </div>
    <div className="flex w-72 shrink-0 items-center overflow-hidden border border-[#6a6a6a] bg-[#3e3e3e] pl-[11px]">
      <svg viewBox="0 0 16 16" className="size-4 shrink-0" fill="none" stroke="#e4e4e4" strokeWidth="1.300"><circle cx="10" cy="6" r="5.300" /><path d="M6.200 9.800L.5 15.500" /></svg>
      <span className="ml-[11px] whitespace-nowrap text-[15px] tracking-[-0.5px] text-[#d8d8d8]">Type here to search</span>
      <svg viewBox="0 0 76 38" className="ml-auto h-[38px] w-[76px] shrink-0">
        <defs>
          <linearGradient id="sky" x1="0" y1="0" x2="0" y2="1"><stop offset="0" stopColor="#2b6cb0" /><stop offset=".45" stopColor="#5b9bd3" /><stop offset=".75" stopColor="#a6a5c8" /><stop offset="1" stopColor="#e2a089" /></linearGradient>
          <filter id="soft"><feGaussianBlur stdDeviation="1.600" /></filter>
        </defs>
        <path d="M3 36C2 24 9 16 17 13 22 4 34 2 41 4c11-2 17 4 20 10 8 3 12 10 11 22z" fill="#25508c" filter="url(#soft)" />
        <path d="M5 34C5 24 10 18 18 15 22 6 34 4 41 6c10-2 15 3 18 10 8 3 11 9 10 18z" fill="url(#sky)" />
        <path d="M0 38l5-5 8-4 5 1 9-6 7 5 8-2 7 5 8-1 7 2 10 3v2z" fill="#2f2f62" />
        <path d="M0 38l9-4 9 1 9-3 10 2 12-1 10 3 15 2z" fill="#171b40" />
        <g fill="#fff3d6"><circle cx="22" cy="9" r="1.200" /><circle cx="28" cy="9" r="1.800" /><circle cx="35" cy="11" r="1.100" /><circle cx="39" cy="8" r="1.100" /><circle cx="54" cy="14" r="2" /><circle cx="40" cy="4" r="1" /><circle cx="47" cy="8" r="1" /><circle cx="24" cy="6" r=".9" /><circle cx="12" cy="17" r="1.500" /><circle cx="9" cy="22" r="1.200" /><circle cx="12" cy="27" r="1" /><circle cx="17" cy="18" r="1" /><circle cx="58" cy="19" r="1" /><circle cx="64" cy="26" r="1.200" /><circle cx="6" cy="27" r="1" /></g>
      </svg>
    </div>
    <div className="ml-[3px] flex gap-px">
      {apps.map((a) => (
        <div key={a.id} className={a.active ? "relative flex w-12 items-center justify-center bg-[#333333]" : "relative flex w-12 items-center justify-center"}>
          <svg viewBox="0 0 24 24" className="size-6">{a.art}</svg>
          {a.run && <span className={a.active ? "absolute inset-x-0 bottom-0 h-0.5 bg-[#76b9ed]" : "absolute inset-x-1 bottom-0 h-0.5 bg-[#76b9ed]"} />}
        </div>
      ))}
    </div>
    <div className="ml-auto flex items-center">
      <svg viewBox="0 0 12 12" className="size-3" fill="none" stroke="white" strokeWidth="1.200"><path d="M.5 9L6 3.500 11.500 9" /></svg>
      <svg viewBox="0 0 12 16" className="ml-[12px] h-4 w-3" fill="none" stroke="white" strokeWidth="1.200"><rect x="1.500" y="4.500" width="7" height="7" rx="1.500" /><path d="M8.500 7l2.500-1.500v5L8.500 9M2.500 2C4 .700 7 .700 8.500 2M2.500 14C4 15.300 7 15.300 8.500 14" /></svg>
      <svg viewBox="0 0 17 12" className="ml-[9px] h-3 w-[17px]" fill="none" stroke="white" strokeWidth="1.100"><path d="M6 2.500h9.500v7H5.500M16.500 5v2" stroke="#bdbdbd" /><path d="M1 .5V3M4 .5V3M.5 3.200h4v2c0 1-.800 1.500-2 1.500s-2-.5-2-1.500zM2.500 6.700v4M8 4l4 4M12 4L8 8" /></svg>
      <svg viewBox="0 0 14 14" className="ml-[10px] size-3.5" fill="none" stroke="#dcdcdc" strokeWidth="1.200"><path d="M.8 13C1 6 6 1.200 13 1.200M3.800 13c.200-5 4-9 9.200-9M6.800 13c.200-3.500 2.700-6 6.200-6M9.500 13c.200-2 1.500-3.200 3.500-3.200" /><circle cx="12" cy="12" r="1" fill="white" /></svg>
      <svg viewBox="0 0 17 16" className="ml-[7px] h-4 w-[17px]" fill="none" stroke="white" strokeWidth="1.200"><path d="M1 5.500h2.500L7 2.500v11L3.500 10.500H1zM9 6c1 1 1 3 0 4M11.300 4.200c2 2 2 5.600 0 7.600M13.600 2.500c3 3 3 8 0 11" /></svg>
      <div className="ml-[3px] flex w-[66px] flex-col items-center whitespace-nowrap text-[12px] leading-[18px] tracking-[-0.42px]">
        <span>2:28 AM</span>
        <span>10/12/2024</span>
      </div>
      <svg viewBox="0 0 18 16" className="ml-[10px] mr-[19px] h-4 w-[18px]" fill="none" stroke="white" strokeWidth="1.200"><path d="M1 1h16v11.500h-5L9 15.300 6 12.500H1z" /></svg>
      <span className="mr-1 h-10 w-px bg-[#5c5c5c]" />
    </div>
  </div>
);

export default function App() {
  return (
    <div className="flex h-[768px] w-[1366px] flex-col overflow-hidden bg-[#2b3a35] font-['Open_Sans','Noto_Sans',sans-serif]">
      <TabStrip />
      <Toolbar />
      <Bookmarks />
      <ConsoleNav />
      <div className="flex h-[535px] shrink-0 overflow-hidden bg-[#16191f]">
        <Sidebar />
        <ResourceMap />
        <ToolRail />
        <PageScroll />
      </div>
      <ConsoleFooter />
      <Taskbar />
    </div>
  );
}
